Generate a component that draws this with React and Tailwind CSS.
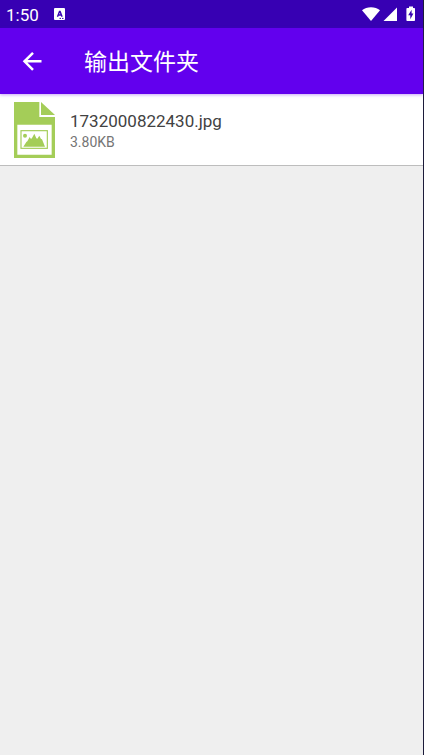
const files = [{ name: "1732000822430.jpg", size: "3.80KB" }];

function StatusBar() {
  return (
    <div className="flex h-7 items-center justify-between bg-[#3700b3] pl-1.5 pr-[7px] text-white">
      <div className="flex items-center gap-[15px]">
        <span className="pt-0.5 text-[17px] leading-6">1:50</span>
        <svg className="h-3 w-3" viewBox="0 0 12 12" aria-hidden="true">
          <rect width="11" height="12" rx="1" fill="#fff" />
          <path
            d="M3.500 8.700 5.500 3.400h.6l2 5.300M4.200 7h3.200"
            fill="none"
            stroke="#3700b3"
            strokeWidth="1.400"
          />
          <path d="M5.500 10.400h1.500M8 10.400h1.500" stroke="#3700b3" />
        </svg>
      </div>
      <div className="flex items-center">
        <svg className="h-4 w-5" viewBox="0 0 20 16" fill="#fff" aria-hidden="true">
          <path d="M9 15 0 4.200C2.400 2.200 5.600 1.200 9 1.200s6.600 1 9 3z" />
        </svg>
        <svg className="h-4 w-4" viewBox="0 0 16 16" fill="#fff" aria-hidden="true">
          <path d="M15 1.500V15H1.500z" />
        </svg>
        <svg className="ml-2 h-4 w-[10px]" viewBox="0 0 10 16" aria-hidden="true">
          <path
            d="M3 .5h4V2h1.200c.5 0 .8.300.8.800v11.400c0 .5-.3.800-.8.800H1.200c-.5 0-.8-.3-.8-.8V2.800c0-.5.300-.8.800-.8H3z"
            fill="#fff"
          />
          <path d="M5.600 3.800 2.200 9.200h2.100v4L7.400 7.600H5.600z" fill="#3700b3" />
        </svg>
      </div>
    </div>
  );
}

function AppBar({ title }) {
  return (
    <header className="relative flex h-[66px] items-center gap-7 bg-[#6200ee] pl-4 text-white shadow-[0_1px_3px_rgba(98,0,238,0.35)]">
      <button type="button" aria-label="返回" className="flex h-10 w-10 items-center pl-1">
        <svg className="h-6 w-6" viewBox="0 0 24 24" aria-hidden="true">
          <path
            d="M21.500 12.300H4.500M13 3.800l-8.500 8.500 8.500 8.500"
            fill="none"
            stroke="#fff"
            strokeWidth="2.500"
          />
        </svg>
      </button>
      <h1 className="pt-1 text-[23px] leading-8">{title}</h1>
    </header>
  );
}

function ImageFileIcon() {
  return (
    <svg className="h-14 w-[41px] shrink-0" viewBox="0 0 123 168" aria-hidden="true">
      <path d="M0 0h76v45h47v123H0z" fill="#a4cd58" />
      <path d="M81 0v39h42z" fill="#a4cd58" />
      <path d="M10 68h103v90H10z" fill="#fff" />
      <rect x="21" y="86" width="79" height="53" fill="none" stroke="#a4cd58" strokeWidth="3.500" />
      <circle cx="33" cy="101" r="6" fill="#a4cd58" />
      <path
        d="M28 134 37 120 40 118 47 105 51 111 54 108 61 95 67 109 70 110 76 101 81 111 84 112 93 134z"
        fill="#a4cd58"
      />
    </svg>
  );
}

function FileRow({ file }) {
  return (
    <li className="border-b border-[#bdbdbd] bg-white">
      <a href="#" className="flex h-[71px] items-center gap-[15px] px-[14px]">
        <ImageFileIcon />
        <span className="flex min-w-0 flex-col pt-0.5">
          <span className="truncate text-[17px] leading-[22px] text-[#424242]">{file.name}</span>
          <span className="text-sm leading-5 text-[#757575]">{file.size}</span>
        </span>
      </a>
    </li>
  );
}

export default function App() {
  return (
    <div className="min-h-screen border-r border-[#1c1b3a] bg-[#efefef] font-[Roboto,'Noto_Sans_CJK_SC',sans-serif]">
      <StatusBar />
      <AppBar title="输出文件夹" />
      <ul>
        {files.map((file) => (
          <FileRow key={file.name} file={file} />
        ))}
      </ul>
    </div>
  );
}
